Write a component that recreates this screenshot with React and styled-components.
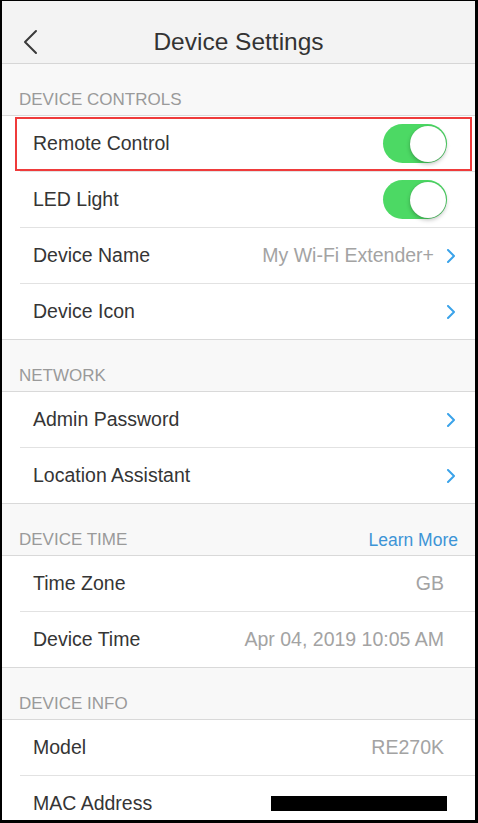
import React from "react";
import styled, { createGlobalStyle } from "styled-components";

const Global = createGlobalStyle`
  html, body { margin: 0; padding: 0; background: #fff; }
  body { font-family: "Liberation Sans", Arial, sans-serif; }
  *, *::before, *::after { box-sizing: border-box; }
`;

const Frame = styled.div`
  width: 478px;
  height: 823px;
  border-style: solid;
  border-color: #000;
  border-width: 1px 3px 3px 2px;
  overflow: hidden;
  background: #f8f8f8;
  display: flex;
  flex-direction: column;
`;

const NavBar = styled.header`
  flex: none;
  height: 63px;
  padding-top: 20px;
  background: #f3f3f3;
  border-bottom: 1px solid #d6d6d6;
  display: grid;
  grid-template-columns: 60px 1fr 60px;
  align-items: center;
`;

const BackButton = styled.button`
  border: 0;
  background: none;
  padding: 0 0 0 20px;
  height: 42px;
  display: flex;
  align-items: center;
  cursor: pointer;
`;

const Title = styled.h1`
  margin: 0;
  font-size: 24.5px;
  font-weight: 400;
  color: #333;
  text-align: center;
`;

const SectionHeader = styled.div`
  flex: none;
  height: 52px;
  border-bottom: 1px solid #d9d9d9;
  background: #f8f8f8;
  display: flex;
  align-items: flex-end;
  justify-content: space-between;
  padding: 0 17px 5px 17px;
`;

const HeaderText = styled.span`
  font-size: 17px;
  line-height: 20px;
  color: #9a9a9a;
`;

const HeaderLink = styled.a`
  font-size: 17.5px;
  line-height: 20px;
  color: #3d94d6;
  text-decoration: none;
`;

const Group = styled.div`
  flex: none;
  background: #fff;
  border-bottom: 1px solid #d9d9d9;
`;

const Row = styled.div`
  position: relative;
  padding-left: 18px;
`;

const RowInner = styled.div`
  display: flex;
  align-items: center;
  padding: 0 19px 0 13px;
  height: ${(p) => (p.$last ? "55px" : "56px")};
  border-bottom: ${(p) => (p.$last ? "0" : "1px solid #e2e2e2")};
`;

const Label = styled.span`
  flex: 1;
  font-size: 19.5px;
  color: #353535;
  white-space: nowrap;
`;

const Value = styled.span`
  font-size: 19.5px;
  color: #a3a3a3;
  white-space: nowrap;
  margin-right: 12px;
`;

const ChevronIcon = styled.svg`
  flex: none;
  width: 10px;
  height: 14px;
`;

const Switch = styled.div`
  flex: none;
  width: 64px;
  height: 39px;
  border-radius: 20px;
  background: #4cd964;
  margin-right: 9px;
  position: relative;
`;

const Knob = styled.span`
  position: absolute;
  right: 1.5px;
  top: 1.5px;
  width: 36px;
  height: 36px;
  border-radius: 50%;
  background: #fff;
  box-shadow: 0 2px 4px rgba(0, 0, 0, 0.25), 0 0 1px rgba(0, 0, 0, 0.2);
`;

const Highlight = styled.div`
  position: absolute;
  left: 13px;
  right: 3px;
  top: 1px;
  bottom: 1px;
  border: 2px solid #ef3b3b;
  pointer-events: none;
`;

const Redacted = styled.span`
  flex: none;
  width: 176px;
  height: 15px;
  background: #000;
  margin-right: 9px;
`;

const Chevron = () => (
  <ChevronIcon viewBox="0 0 10 14">
    <polyline points="2,1 8,7 2,13" fill="none" stroke="#3ba3ea" strokeWidth="2" strokeLinecap="round" strokeLinejoin="round" />
  </ChevronIcon>
);

const Toggle = () => (
  <Switch>
    <Knob />
  </Switch>
);

function Cell({ label, value, chevron, toggle, last, highlight, redacted }) {
  return (
    <Row>
      <RowInner $last={last}>
        <Label>{label}</Label>
        {value && <Value>{value}</Value>}
        {toggle && <Toggle />}
        {redacted && <Redacted />}
        {chevron && <Chevron />}
      </RowInner>
      {highlight && <Highlight />}
    </Row>
  );
}

export default function App() {
  return (
    <>
      <Global />
      <Frame>
        <NavBar>
          <BackButton aria-label="Back">
            <svg width="16" height="26" viewBox="0 0 16 26">
              <polyline points="14,2 3,13 14,24" fill="none" stroke="#3a3a3a" strokeWidth="2" strokeLinecap="round" strokeLinejoin="round" />
            </svg>
          </BackButton>
          <Title>Device Settings</Title>
          <span />
        </NavBar>

        <SectionHeader>
          <HeaderText>DEVICE CONTROLS</HeaderText>
        </SectionHeader>
        <Group>
          <Cell label="Remote Control" toggle highlight />
          <Cell label="LED Light" toggle />
          <Cell label="Device Name" value="My Wi-Fi Extender+" chevron />
          <Cell label="Device Icon" chevron last />
        </Group>

        <SectionHeader>
          <HeaderText>NETWORK</HeaderText>
        </SectionHeader>
        <Group>
          <Cell label="Admin Password" chevron />
          <Cell label="Location Assistant" chevron last />
        </Group>

        <SectionHeader>
          <HeaderText>DEVICE TIME</HeaderText>
          <HeaderLink href="#">Learn More</HeaderLink>
        </SectionHeader>
        <Group>
          <Cell label="Time Zone" value="GB" />
          <Cell label="Device Time" value="Apr 04, 2019 10:05 AM" last />
        </Group>

        <SectionHeader>
          <HeaderText>DEVICE INFO</HeaderText>
        </SectionHeader>
        <Group>
          <Cell label="Model" value="RE270K" />
          <Cell label="MAC Address" redacted last />
        </Group>
      </Frame>
    </>
  );
}
